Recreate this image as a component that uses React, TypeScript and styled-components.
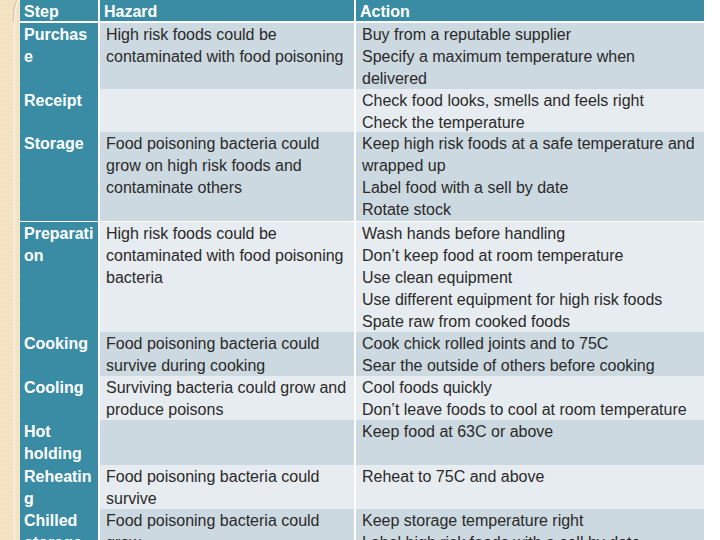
import React from "react";
import styled, { createGlobalStyle } from "styled-components";

type Tone = "dark" | "light";

interface RowData {
  step: string[];
  hazard: string[];
  action: string[];
  height: number;
  tone: Tone;
}

const rows: RowData[] = [
  {
    step: ["Purchas", "e"],
    hazard: ["High risk foods could be", "contaminated with food poisoning"],
    action: [
      "Buy from a reputable supplier",
      "Specify a maximum temperature when",
      "delivered",
    ],
    height: 64,
    tone: "dark",
  },
  {
    step: ["Receipt"],
    hazard: [],
    action: ["Check food looks, smells and feels right", "Check the temperature"],
    height: 41,
    tone: "light",
  },
  {
    step: ["Storage"],
    hazard: [
      "Food poisoning bacteria could",
      "grow on high risk foods and",
      "contaminate others",
    ],
    action: [
      "Keep high risk foods at a safe temperature and",
      "wrapped up",
      "Label food with a sell by date",
      "Rotate stock",
    ],
    height: 88,
    tone: "dark",
  },
  {
    step: ["Preparati", "on"],
    hazard: [
      "High risk foods could be",
      "contaminated with food poisoning",
      "bacteria",
    ],
    action: [
      "Wash hands before handling",
      "Don\u2019t keep food at room temperature",
      "Use clean equipment",
      "Use different equipment for high risk foods",
      "Spate raw from cooked foods",
    ],
    height: 108,
    tone: "light",
  },
  {
    step: ["Cooking"],
    hazard: ["Food poisoning bacteria could", "survive during cooking"],
    action: [
      "Cook chick rolled joints and to 75C",
      "Sear the outside of others before cooking",
    ],
    height: 42,
    tone: "dark",
  },
  {
    step: ["Cooling"],
    hazard: ["Surviving bacteria could grow and", "produce poisons"],
    action: [
      "Cool foods quickly",
      "Don\u2019t leave foods to cool at room temperature",
    ],
    height: 42,
    tone: "light",
  },
  {
    step: ["Hot", "holding"],
    hazard: [],
    action: ["Keep food at 63C or above"],
    height: 43,
    tone: "dark",
  },
  {
    step: ["Reheatin", "g"],
    hazard: ["Food poisoning bacteria could", "survive"],
    action: ["Reheat to 75C and above"],
    height: 42,
    tone: "light",
  },
  {
    step: ["Chilled", "storage"],
    hazard: ["Food poisoning bacteria could", "grow"],
    action: [
      "Keep storage temperature right",
      "Label high risk foods with a sell by date",
    ],
    height: 64,
    tone: "dark",
  },
];

const GlobalStyle = createGlobalStyle`
  html, body {
    margin: 0;
    padding: 0;
    background: #ffffff;
    overflow: hidden;
  }
  body {
    font-family: "Liberation Sans", Arial, sans-serif;
  }
`;

const Page = styled.div`
  display: flex;
  width: 720px;
  height: 540px;
  overflow: hidden;
`;

const Margin = styled.div`
  flex: 0 0 20px;
  height: 540px;
  background-color: #f3e2c0;
  background-image: radial-gradient(#f9eed6 0.8px, transparent 1px);
  background-size: 3px 3px;
`;

const Table = styled.div`
  display: flex;
  flex-direction: column;
  gap: 2px;
  width: 684px;
`;

const Row = styled.div<{ $height: number }>`
  display: grid;
  grid-template-columns: 78px 254px 348px;
  column-gap: 2px;
  height: ${(p) => p.$height}px;
  flex: 0 0 auto;
`;

const HeadCell = styled.div`
  background: #3a8ca5;
  color: #ffffff;
  font-weight: bold;
  font-size: 16px;
  line-height: 22px;
  padding: 1px 4px 0;
  white-space: nowrap;
  overflow: hidden;
`;

const StepCell = styled.div`
  background: #3a8ca5;
  color: #ffffff;
  font-weight: bold;
  font-size: 16px;
  line-height: 22px;
  padding: 1px 4px 0;
  white-space: nowrap;
  overflow: visible;
`;

const TextCell = styled.div<{ $tone: Tone }>`
  background: ${(p) => (p.$tone === "dark" ? "#cdd9e0" : "#e7ecf0")};
  color: #2a2a2a;
  font-size: 16px;
  line-height: 22px;
  padding: 1px 6px 0;
  white-space: nowrap;
  overflow: visible;
  position: relative;
  z-index: 1;
`;

const Line = styled.div`
  height: 22px;
`;

const lines = (items: string[]) =>
  items.map((t, i) => <Line key={i}>{t}</Line>);

export default function App() {
  return (
    <>
      <GlobalStyle />
      <Page>
        <Margin>
          <svg width="20" height="540" viewBox="0 0 20 540">
            <path
              d="M19 0 C15 6 14 12 14.5 22 L14.5 540"
              stroke="#faf3e2"
              strokeWidth="1.5"
              fill="none"
            />
            <path
              d="M17 0 C14 6 13 12 13.5 22"
              stroke="#c9b48e"
              strokeWidth="0.8"
              fill="none"
            />
          </svg>
        </Margin>
        <Table>
          <Row $height={21}>
            <HeadCell>Step</HeadCell>
            <HeadCell>Hazard</HeadCell>
            <HeadCell>Action</HeadCell>
          </Row>
          {rows.map((r, i) => (
            <Row key={i} $height={r.height}>
              <StepCell>{lines(r.step)}</StepCell>
              <TextCell $tone={r.tone}>{lines(r.hazard)}</TextCell>
              <TextCell $tone={r.tone}>{lines(r.action)}</TextCell>
            </Row>
          ))}
        </Table>
      </Page>
    </>
  );
}
